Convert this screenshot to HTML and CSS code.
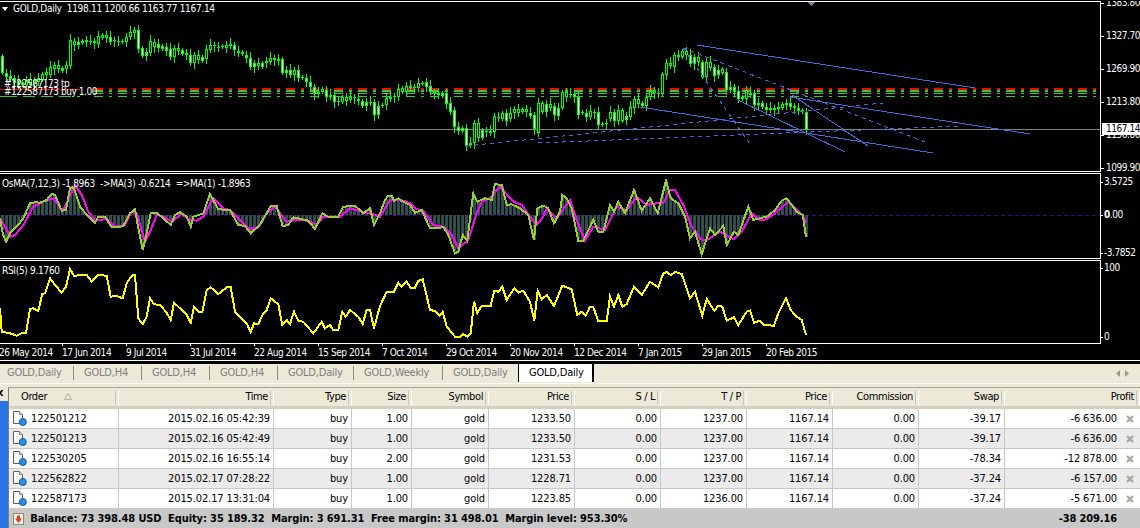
FILE: index.html
```html
<!DOCTYPE html>
<html>
	<head>
		<meta charset="utf-8">
		<title>GOLD,Daily</title>
		<link rel="stylesheet" href="styles.css">
	</head>
	<body>
		<div class="charts">
			<div class="row row-main">
				<div class="plot" id="plot-main">
					<span class="legend legend-main"><i class="menu-arrow"></i>GOLD,Daily&nbsp; 1198.11 1200.66 1163.77 1167.14</span>
					<span class="order-label order-tp">#122587173 tp</span>
					<span class="order-label order-buy">#122587173 buy 1.00</span>
				</div>
				<div class="scale">
					<span class="tick" style="top:-4px">1383.80</span>
					<span class="tick" style="top:29px">1327.70</span>
					<span class="tick" style="top:62px">1269.90</span>
					<span class="tick" style="top:95px">1213.80</span>
					<span class="tick" style="top:128px">1156.00</span>
					<span class="tick" style="top:161px">1099.90</span>
					<span class="bid">1167.14</span>
				</div>
			</div>
			<div class="row row-osma">
				<div class="plot" id="plot-osma">
					<span class="legend legend-sub">OsMA(7,12,3) -1.8963 &nbsp;-&gt;MA(3) -0.6214 &nbsp;=&gt;MA(1) -1.8963</span>
				</div>
				<div class="scale">
					<span class="tick tick-far" style="top:3px">3.5725</span>
					<span class="tick tick-far" style="top:36px"><b>0</b>.00</span>
					<span class="tick tick-far" style="top:74px">-3.7852</span>
				</div>
			</div>
			<div class="row row-rsi">
				<div class="plot" id="plot-rsi">
					<span class="legend legend-sub">RSI(5) 9.1760</span>
				</div>
				<div class="scale">
					<span class="tick tick-far" style="top:2px">100</span>
					<span class="tick tick-far" style="top:71px">0</span>
				</div>
			</div>
			<div class="timeline">
				<span class="date date-first">26 May 2014</span>
				<span class="date">17 Jun 2014</span>
				<span class="date">9 Jul 2014</span>
				<span class="date">31 Jul 2014</span>
				<span class="date">22 Aug 2014</span>
				<span class="date">15 Sep 2014</span>
				<span class="date">7 Oct 2014</span>
				<span class="date">29 Oct 2014</span>
				<span class="date">20 Nov 2014</span>
				<span class="date">12 Dec 2014</span>
				<span class="date">7 Jan 2015</span>
				<span class="date">29 Jan 2015</span>
				<span class="date">20 Feb 2015</span>
			</div>
		</div>

		<div class="tabs">
			<span class="tab tab-first">GOLD,Daily</span>
			<span class="tab tab-h4">GOLD,H4</span>
			<span class="tab tab-h4">GOLD,H4</span>
			<span class="tab tab-h4">GOLD,H4</span>
			<span class="tab">GOLD,Daily</span>
			<span class="tab tab-weekly">GOLD,Weekly</span>
			<span class="tab tab-last">GOLD,Daily</span>
			<span class="tab tab-active">GOLD,Daily</span>
			<span class="tab-arrows">
				<svg width="6" height="7" viewBox="0 0 6 7"><path d="M5 0v7L1 3.500z" fill="#9d9a8c"/></svg>
				<svg width="6" height="7" viewBox="0 0 6 7"><path d="M1 0v7l4-3.500z" fill="#9d9a8c"/></svg>
			</span>
		</div>

		<div class="terminal">
			<div class="side">
				<span class="side-close">x</span>
				<div class="side-blue"></div>
			</div>
			<table class="trades">
				<colgroup>
					<col class="c-order"><col class="c-time"><col class="c-type"><col class="c-size"><col class="c-symbol">
					<col class="c-num"><col class="c-num"><col class="c-num"><col class="c-num"><col class="c-num"><col class="c-num">
					<col class="c-profit">
				</colgroup>
				<thead>
					<tr>
						<th class="left">Order<svg class="sort" width="8" height="7" viewBox="0 0 8 7"><path d="M4 .5 7.500 6.500H.5z" fill="none" stroke="#b5b2a4"/></svg></th>
						<th>Time</th><th>Type</th><th>Size</th><th>Symbol</th><th>Price</th><th>S / L</th><th>T / P</th><th>Price</th><th>Commission</th><th>Swap</th><th>Profit</th>
					</tr>
				</thead>
				<tbody>
					<tr>
						<td class="left"><svg class="doc" width="16" height="16" viewBox="0 0 16 16"><use href="#doc-icon"/></svg>122501212</td>
						<td>2015.02.16 05:42:39</td><td>buy</td><td>1.00</td><td>gold</td><td>1233.50</td><td>0.00</td><td>1237.00</td><td>1167.14</td><td>0.00</td><td>-39.17</td>
						<td class="profit">-6 636.00<svg class="cross" width="8" height="8" viewBox="0 0 8 8"><use href="#cross-icon"/></svg></td>
					</tr>
					<tr>
						<td class="left"><svg class="doc" width="16" height="16" viewBox="0 0 16 16"><use href="#doc-icon"/></svg>122501213</td>
						<td>2015.02.16 05:42:49</td><td>buy</td><td>1.00</td><td>gold</td><td>1233.50</td><td>0.00</td><td>1237.00</td><td>1167.14</td><td>0.00</td><td>-39.17</td>
						<td class="profit">-6 636.00<svg class="cross" width="8" height="8" viewBox="0 0 8 8"><use href="#cross-icon"/></svg></td>
					</tr>
					<tr>
						<td class="left"><svg class="doc" width="16" height="16" viewBox="0 0 16 16"><use href="#doc-icon"/></svg>122530205</td>
						<td>2015.02.16 16:55:14</td><td>buy</td><td>2.00</td><td>gold</td><td>1231.53</td><td>0.00</td><td>1237.00</td><td>1167.14</td><td>0.00</td><td>-78.34</td>
						<td class="profit">-12 878.00<svg class="cross" width="8" height="8" viewBox="0 0 8 8"><use href="#cross-icon"/></svg></td>
					</tr>
					<tr>
						<td class="left"><svg class="doc" width="16" height="16" viewBox="0 0 16 16"><use href="#doc-icon"/></svg>122562822</td>
						<td>2015.02.17 07:28:22</td><td>buy</td><td>1.00</td><td>gold</td><td>1228.71</td><td>0.00</td><td>1237.00</td><td>1167.14</td><td>0.00</td><td>-37.24</td>
						<td class="profit">-6 157.00<svg class="cross" width="8" height="8" viewBox="0 0 8 8"><use href="#cross-icon"/></svg></td>
					</tr>
					<tr class="last">
						<td class="left"><svg class="doc" width="16" height="16" viewBox="0 0 16 16"><use href="#doc-icon"/></svg>122587173</td>
						<td>2015.02.17 13:31:04</td><td>buy</td><td>1.00</td><td>gold</td><td>1223.85</td><td>0.00</td><td>1236.00</td><td>1167.14</td><td>0.00</td><td>-37.24</td>
						<td class="profit">-5 671.00<svg class="cross" width="8" height="8" viewBox="0 0 8 8"><use href="#cross-icon"/></svg></td>
					</tr>
				</tbody>
				<tfoot>
					<tr>
						<td class="left summary" colspan="11">
							<svg class="loss" width="11" height="12" viewBox="0 0 11 12"><rect x=".5" y=".5" width="10" height="11" fill="#f3efe3" stroke="#8a8778"/><path d="M4 2.500h3v3h2L5.500 10 2 5.500h2z" fill="#d8401a"/></svg>
							Balance: 73 398.48 USD&nbsp; Equity: 35 189.32&nbsp; Margin: 3 691.31&nbsp; Free margin: 31 498.01&nbsp; Margin level: 953.30%
						</td>
						<td class="profit total">-38 209.16</td>
					</tr>
				</tfoot>
			</table>
		</div>

		<svg class="defs" width="0" height="0">
			<defs>
				<g id="doc-icon">
					<path d="M1.500 1.500h6l3 3v9h-9z" fill="#fff" stroke="#5a5a5a"/>
					<path d="M7.500 1.500v3h3" fill="#e4e4e4" stroke="#8a8a8a"/>
					<circle cx="10.800" cy="12" r="3.500" fill="#2a8fe4" stroke="#0c5ea6"/>
				</g>
				<path id="cross-icon" d="M1 1l6 6M7 1 1 7" fill="none" stroke="#aaa698" stroke-width="2.200"/>
			</defs>
		</svg>

		<script src="chart.js"></script>
	</body>
</html>
```

FILE: styles.css
```css
*{
	margin: 0;
	padding: 0;
	box-sizing: border-box;
}
html,body{
	width: 1140px;
	height: 528px;
	overflow: hidden;
}
body{
	background-color: #ece9d8;
	font-family: "DejaVu Sans Condensed", "Liberation Sans", sans-serif;
	font-size: 11px;
	color: #000;
}
.defs{
	position: absolute;
}

/* chart window */
.charts{
	height: 364px;
	padding-top: 1px;
	background-color: #000;
	color: #fff;
	font-size: 10px;
	line-height: 12px;
	letter-spacing: -0.45px;
}
.row{
	display: flex;
	margin-bottom: 1px;
}
.row-main{
	height: 171px;
}
.row-osma{
	height: 86px;
}
.row-rsi{
	height: 84px;
	margin-bottom: 0;
}
.plot{
	position: relative;
	width: 1101px;
	border: 1px solid #fff;
	border-left: 0;
	overflow: hidden;
}
.plot svg{
	display: block;
	shape-rendering: crispEdges;
}
.scale{
	position: relative;
	flex: 1;
	overflow: hidden;
}
.tick{
	position: absolute;
	left: 5px;
	white-space: nowrap;
}
.tick::before{
	content: "";
	position: absolute;
	left: -5px;
	top: 6px;
	width: 3px;
	height: 1px;
	background-color: #fff;
}
.tick-far{
	left: 3px;
}
.tick-far::before{
	left: -3px;
	width: 2px;
}
.bid{
	position: absolute;
	left: 1px;
	top: 122px;
	width: 38px;
	height: 12px;
	padding-left: 4px;
	background-color: #fff;
	color: #000;
}
.legend{
	position: absolute;
	left: 2px;
	top: 1px;
	letter-spacing: -0.3px;
	white-space: nowrap;
}
.legend-sub{
	top: 4px;
}
.menu-arrow{
	display: inline-block;
	width: 0;
	height: 0;
	margin-right: 5px;
	vertical-align: 1px;
	border-top: 4px solid #fff;
	border-left: 3px solid transparent;
	border-right: 3px solid transparent;
}
.order-label{
	position: absolute;
	left: 4px;
	white-space: nowrap;
}
.order-tp{
	top: 76px;
}
.order-buy{
	top: 84px;
}
.timeline{
	display: flex;
	height: 17px;
	padding-top: 2px;
	border-bottom: 1px solid #fff;
	overflow: hidden;
}
.date{
	position: relative;
	flex: none;
	width: 64px;
	padding-top: 1px;
	white-space: nowrap;
}
.date::before{
	content: "";
	position: absolute;
	left: 0;
	top: -2px;
	width: 1px;
	height: 2px;
	background-color: #fff;
}
.date-first{
	width: 63px;
	margin-left: -1px;
}
.date-first::before{
	display: none;
}

/* tab strip */
.tabs{
	display: flex;
	align-items: flex-start;
	height: 20px;
	border-bottom: 1px solid #fbfaf5;
	color: #7d7d7d;
	letter-spacing: -0.2px;
}
.tab{
	flex: none;
	width: 76px;
	height: 14px;
	margin-top: 2px;
	padding-left: 10px;
	line-height: 14px;
	border-right: 1px solid #8f8e85;
	white-space: nowrap;
}
.tab-first{
	width: 74px;
	padding-left: 7px;
}
.tab-h4{
	width: 68px;
}
.tab-weekly{
	width: 89px;
}
.tab-last{
	width: 75px;
	border-right: 0;
}
.tab.tab-active{
	height: 19px;
	margin-top: -1px;
	padding: 2px 0 0 10px;
	background-color: #fff;
	border: 1px solid #000;
	border-bottom: 0;
	border-right-width: 2px;
	color: #000;
}
.tab-arrows{
	display: flex;
	gap: 3px;
	margin: 6px 0 0 auto;
	padding-right: 10px;
}

/* trades */
.terminal{
	display: flex;
	height: 144px;
	padding-top: 3px;
}
.side{
	flex: none;
	width: 8px;
	overflow: hidden;
	margin-top: -3px;
}
.side-close{
	display: block;
	height: 17px;
	padding-top: 2px;
	margin-left: -3px;
	font-weight: bold;
	line-height: 14px;
}
.side-blue{
	height: 127px;
	background-color: #2b74e6;
}
.trades{
	table-layout: fixed;
	width: 1132px;
	height: 141px;
	border-collapse: separate;
	border-spacing: 0;
	border-left: 1px solid #7f7e75;
	border-top: 1px solid #a5a396;
	letter-spacing: -0.12px;
}
.c-order{
	width: 110px;
}
.c-time{
	width: 155px;
}
.c-type{
	width: 78px;
}
.c-size{
	width: 60px;
}
.c-symbol{
	width: 77px;
}
.c-num{
	width: 86px;
}
.c-profit{
	width: 135px;
}
th{
	position: relative;
	height: 21px;
	padding: 0 6px 2px 0;
	background-color: #ece9d8;
	border-bottom: 3px solid #d3d0c0;
	font-weight: normal;
	letter-spacing: -0.4px;
	text-align: right;
	white-space: nowrap;
}
th::after{
	content: "";
	position: absolute;
	right: 0;
	top: 3px;
	width: 2px;
	height: 14px;
	border-left: 1px solid #c7c4b4;
	border-right: 1px solid #fff;
}
th.left{
	padding-left: 12px;
	text-align: left;
}
.sort{
	margin-left: 17px;
}
td{
	height: 20px;
	padding: 0 3px 0 0;
	background-color: #fff;
	border-right: 1px solid #c8c8c8;
	border-bottom: 1px solid #c8c8c8;
	text-align: right;
	white-space: nowrap;
}
tbody tr:nth-child(even) td{
	background-color: #ebebeb;
}
tr.last td{
	height: 19px;
	border-bottom: 0;
}
td.left{
	text-align: left;
	padding-left: 3px;
}
.doc{
	margin: -5px 3px -5px 0;
	vertical-align: 1px;
}
.profit{
	padding-right: 23px;
	position: relative;
	border-right: 0;
}
.cross{
	position: absolute;
	right: 6px;
	top: 6px;
}
tfoot td{
	height: 20px;
	background-color: #c8c8c8;
	border: 0;
	font-weight: bold;
}
td.summary{
	letter-spacing: -0.11px;
}
.loss{
	margin: -3px 3px -3px 1px;
	vertical-align: 0;
}
```

FILE: chart.js
```js
(function(){
	var NS = "http://www.w3.org/2000/svg";
	var GREEN = "#00ff00";
	var BLUE = "#4169e1";

	// candle bodies: top,bottom, one pair every 4px, read off a 3x zoom
	var bodies = (
		"168,218 220,230 228,238 235,250 240,255 245,255 240,255 238,255 240,252 235,245 222,240 215,225 200,225 196,208 195,207 203,212 195,207 120,197 122,135 125,135 122,130 120,125 122,125 124,130 108,132 105,115 105,115 110,125 120,124 122,124 122,125 110,125 95,112 90,98 90,148 145,168 155,168 122,158 127,140 133,143 138,148 140,152 148,172 143,170 145,152 150,163 160,165 165,188 165,190 165,180 172,182 148,178 135,150 135,138 140,142 138,140 135,145 132,138 135,150 152,160 157,163 165,173 173,202 188,200 190,197 190,200 182,190 175,185 175,180 176,183 178,218 210,218 210,225 210,225 210,235 232,235 235,245 245,262 262,282 275,282 268,275 270,290 285,292 285,305 303,305 290,305 290,302 290,300 290,295 298,302 303,318 305,318 305,310 307,345 318,345 " +
		"315,318 295,315 290,297 288,290 268,292 265,275 257,275 258,263 262,265 250,263 248,252 247,260 258,275 275,280 278,285 280,288 280,312 310,335 330,380 382,392 385,392 385,437 430,435 370,430 370,415 390,415 393,395 393,398 348,395 350,352 338,358 338,362 340,358 328,340 328,340 328,335 328,337 338,347 345,388 310,400 310,335 312,335 313,325 318,345 325,348 275,325 275,290 283,285 283,292 290,345 337,340 338,350 333,350 335,338 337,375 372,375 370,373 337,357 337,362 330,362 330,362 348,360 322,350 298,325 298,312 310,317 290,318 272,290 270,280 278,280 222,282 190,225 190,198 165,200 165,170 152,170 152,165 165,192 170,192 170,185 187,232 185,232 187,203 200,227 210,225 208,220 215,270 262,270 262,272 272,298 292,298 270,296 278,285 278,315 310,315 " +
		"308,320 320,330 325,330 325,330 322,327 313,323 308,315 308,320 318,325 325,332 330,335 335,390"
	).split(" ");

	// indicator lines as x,y pairs in zoom px, with the zoom's x offset
	var osmaSignal = [
		[0,"0,145 8,190 18,215 30,190 55,165 70,145 90,100 105,97 120,98 140,90 155,72 165,75 185,122 198,120 210,55 222,55 240,110 265,140 285,160 295,140 315,140 335,172 350,172 370,168 390,130 405,118 415,175 428,240 440,190 452,130 470,128 490,145 512,165 525,135 540,127 560,140 572,170 580,140 610,130 630,72 655,118 690,120 715,165 735,168 752,190 780,165 812,108 830,108 848,168 865,165 880,142 925,152 945,177 967,130 985,140 1015,140 1030,110 1065,107 1090,130 1110,115 1122,165"],
		[380,"0,130 15,90 25,77 35,77 42,92 55,85 70,95 90,105 105,128 125,120 150,175 175,175 190,170 205,195 225,250 235,245 248,195 262,212 280,70 292,95 315,85 335,90 345,42 365,45 380,105 395,103 420,115 445,135 462,210 472,115 490,107 505,115 522,160 540,125 547,75 560,85 575,115 595,212 610,212 640,150 655,185 670,185 690,105 702,125 715,95 735,130 762,60 785,122 810,85 833,130 858,32 872,85 895,100 915,140 930,205 945,185 965,252 990,175 1005,195 1030,168 1040,225 1062,185 1075,195 1105,110 1120,150"],
		[760,"0,145 20,140 45,120 65,92 80,85 95,105 110,125 128,135 138,200"]
	];
	var osmaMain = [
		[0,"0,145 15,170 30,200 45,195 70,165 100,110 130,95 160,85 185,120 195,110 225,45 245,75 265,125 285,152 305,150 320,145 345,170 375,165 395,125 410,130 435,215 450,185 470,135 490,140 515,155 545,132 570,150 590,152 610,140 640,85 670,115 690,120 720,150 750,178 775,170 800,130 825,110 840,130 860,155 885,150 925,152 950,165 970,140 1020,140 1050,115 1085,125 1110,130"],
		[380,"0,140 30,90 70,92 90,100 110,118 130,122 160,165 190,170 215,195 235,235 265,210 290,130 305,95 330,85 360,50 400,95 425,105 450,140 470,165 490,140 500,115 530,145 570,90 590,150 615,212 640,170 675,180 710,110 740,120 770,80 800,105 830,100 850,100 870,60 885,60 910,105 935,170 965,210 985,208 1020,185 1060,208 1085,185 1115,130"],
		[760,"0,150 20,148 50,125 85,95 105,115 128,135 138,158"]
	];
	var rsi = [
		[0,"0,415 5,485 30,490 50,497 65,490 78,490 90,417 100,415 115,423 127,372 135,370 150,325 165,345 185,368 198,350 210,298 222,317 260,315 275,335 295,315 320,317 332,380 350,378 368,385 380,340 395,317 405,315 415,445 428,462 440,440 450,385 462,403 480,405 498,425 512,450 522,398 545,420 560,435 572,458 582,410 595,425 607,425 620,360 632,352 655,372 680,352 692,352 705,425 725,445 740,460 752,487 762,460 775,462 790,430 800,420 812,385 835,403 847,465 860,450 870,462 882,425 895,452 910,455 940,490 965,455 975,475 990,465 1000,480 1015,480 1027,425 1037,440 1050,420 1075,440 1088,462 1100,420 1110,420 1122,475"],
		[380,"0,408 20,365 42,365 55,338 65,350 80,335 92,353 105,353 115,333 128,328 150,420 165,423 178,437 188,425 200,470 225,500 240,500 248,492 262,500 272,490 282,395 292,430 305,407 332,407 343,362 355,365 367,350 380,390 403,355 415,368 430,362 450,395 463,452 473,362 485,388 500,375 522,408 547,347 575,358 592,435 605,425 617,437 630,410 640,412 655,453 680,453 690,380 702,410 715,375 727,410 740,402 762,350 785,375 810,335 835,352 850,310 860,306 872,315 885,306 905,312 930,385 945,365 967,437 980,387 1003,422 1015,407 1027,410 1040,452 1062,442 1075,465 1100,425 1110,422 1122,458"],
		[760,"0,452 12,465 42,467 55,430 78,385 92,420 110,440 125,450 138,495"]
	];

	// trend lines in page px: x1,y1,x2,y2
	var solidLines = [
		[697,45,975,88],
		[640,107,933,153],
		[790,97,1030,134],
		[792,95,868,146],
		[738,100,845,152]
	];
	var dashedLines = [
		[466,146,883,103],
		[538,143,960,126],
		[683,48,752,147],
		[683,48,925,142]
	];

	// order levels: y, height, colour
	var levels = [
		[88,2,"#ff0000"],
		[90,2,"#32cd32"],
		[93,1,"#32cd32"],
		[96,1,"#32cd32"]
	];

	function el(name,attrs){
		var node = document.createElementNS(NS,name);
		for(var key in attrs){
			node.setAttribute(key,attrs[key]);
		}
		return node;
	}

	function makeSvg(id,top,height){
		var plot = document.getElementById(id);
		var svg = el("svg",{width:1100,height:height,viewBox:"0 "+top+" 1100 "+height});
		plot.insertBefore(svg,plot.firstChild);
		return svg;
	}

	function toPoints(parts,yOffset){
		var pts = [];
		parts.forEach(function(part){
			part[1].split(" ").forEach(function(pair){
				var xy = pair.split(",");
				pts.push([part[0] + xy[0] / 3,yOffset + xy[1] / 3]);
			});
		});
		return pts;
	}

	function polyline(svg,pts,color,width){
		svg.appendChild(el("polyline",{
			points:pts.map(function(p){ return p[0].toFixed(1)+","+p[1].toFixed(1); }).join(" "),
			fill:"none",
			stroke:color,
			"stroke-width":width
		}));
	}

	function rect(svg,x,y,w,h,color){
		svg.appendChild(el("rect",{x:x,y:y,width:w,height:h,fill:color}));
	}

	function hline(svg,x1,x2,y,color,dash,width){
		svg.appendChild(el("line",{x1:x1,y1:y,x2:x2,y2:y,stroke:color,"stroke-dasharray":dash,"stroke-width":width || 1}));
	}

	function valueAt(pts,x){
		for(var i = 1;i < pts.length;i++){
			if(x <= pts[i][0]){
				var t = (x - pts[i-1][0]) / (pts[i][0] - pts[i-1][0]);
				return pts[i-1][1] + t * (pts[i][1] - pts[i-1][1]);
			}
		}
		return pts[pts.length-1][1];
	}

	function drawMain(){
		var svg = makeSvg("plot-main",2,169);

		// order levels sit under the candles
		hline(svg,0,80,89.500,"#ff0000","60 1 20 0");
		hline(svg,0,80,96.500,"#32cd32","17 6 12 6 12 6 12 6");
		levels.forEach(function(lv){
			hline(svg,94,1096,lv[0] + lv[1] / 2,lv[2],"9 6 3 6",lv[1]);
		});

		hline(svg,0,1100,129.500,"#808080");

		var prevMid = 0;
		bodies.forEach(function(pair,i){
			var xy = pair.split(",");
			var top = Math.round(xy[0] / 3);
			var bottom = Math.max(Math.round(xy[1] / 3),top + 1);
			var x = 2 + 4 * i;
			var mid = (top + bottom) / 2;
			// no high/low in the data, wicks just vary a little
			rect(svg,x,top - 2 - (i * 7) % 5,1,bottom - top + 4 + (i * 7) % 5 + (i * 3) % 5,GREEN);
			rect(svg,x - 1,top,3,bottom - top,GREEN);
			if(bottom - top > 2){
				rect(svg,x,top + 1,1,bottom - top - 2,mid > prevMid ? "#ffffff" : "#000000");
			}
			prevMid = mid;
		});

		solidLines.forEach(function(l){
			svg.appendChild(el("line",{x1:l[0],y1:l[1],x2:l[2],y2:l[3],stroke:BLUE}));
		});
		dashedLines.forEach(function(l){
			svg.appendChild(el("line",{x1:l[0],y1:l[1],x2:l[2],y2:l[3],stroke:BLUE,"stroke-dasharray":"4 4"}));
		});

		// chart shift marker
		svg.appendChild(el("polygon",{points:"807,2 816,2 811.500,6",fill:"#708090"}));
	}

	function drawOsma(){
		var svg = makeSvg("plot-osma",174,84);
		var signal = toPoints(osmaSignal,170);
		var main = toPoints(osmaMain,170);
		var zero = 215;

		hline(svg,0,1100,215.500,"#4b0082","4 3");
		for(var x = 2;x <= 806;x += 4){
			var y = valueAt(signal,x);
			rect(svg,x - 1,Math.min(y,zero),3,Math.abs(y - zero),"#2f4f4f");
		}
		polyline(svg,main,"#ff00ff",2);
		polyline(svg,signal,"#9acd32",2);
	}

	function drawRsi(){
		var svg = makeSvg("plot-rsi",261,82);
		polyline(svg,toPoints(rsi,170),"#ffff00",2);
	}

	drawMain();
	drawOsma();
	drawRsi();
})();
```
